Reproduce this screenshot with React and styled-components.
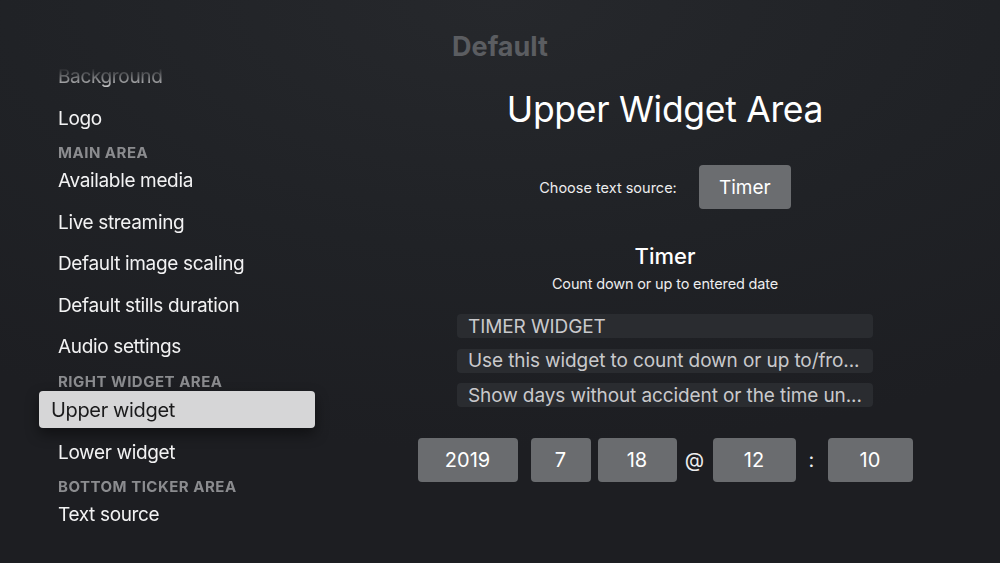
import React from "react";
import styled, { createGlobalStyle } from "styled-components";

const Global = createGlobalStyle`
  html, body { margin: 0; padding: 0; background: #1f2125; }
  body { font-family: Inter, "Noto Sans", sans-serif; -webkit-font-smoothing: antialiased; }
  * { box-sizing: border-box; }
`;

const Screen = styled.div`
  width: 1000px;
  height: 563px;
  overflow: hidden;
  background: radial-gradient(ellipse 90% 80% at 50% 0%, #26282c 0%, #202226 55%, #1d1e22 100%);
  display: flex;
  flex-direction: column;
`;

const TopTitle = styled.div`
  height: 56px;
  padding-top: 32px;
  line-height: 30px;
  text-align: center;
  font-size: 27px;
  font-weight: 700;
  color: #5b5d61;
`;

const Body = styled.div`
  flex: 1;
  display: flex;
  min-height: 0;
`;

const Sidebar = styled.div`
  width: 330px;
  flex: none;
  display: flex;
  flex-direction: column;
  -webkit-mask-image: linear-gradient(to bottom, transparent 0px, transparent 12px, #000 36px);
  mask-image: linear-gradient(to bottom, transparent 0px, transparent 12px, #000 36px);
`;

const Item = styled.div`
  margin-left: 39px;
  width: 276px;
  height: ${(p) => (p.$focused ? "37px" : "41.5px")};
  margin-top: ${(p) => (p.$focused ? "2.75px" : "0")};
  margin-bottom: ${(p) => (p.$focused ? "3.25px" : "0")};
  padding-left: ${(p) => (p.$focused ? "12px" : "19px")};
  display: flex;
  align-items: center;
  font-size: ${(p) => (p.$focused ? "20px" : "19px")};
  color: ${(p) => (p.$focused ? "#1b1b1c" : "#f2f2f3")};
  background: ${(p) => (p.$focused ? "#d6d6d7" : "transparent")};
  border-radius: 4px;
  box-shadow: ${(p) => (p.$focused ? "0 6px 14px rgba(0,0,0,0.45)" : "none")};
  white-space: nowrap;
  letter-spacing: -0.35px;
`;

const SectionHead = styled.div`
  margin-top: 7px;
  margin-left: 58px;
  height: 14px;
  line-height: 14px;
  font-size: 15px;
  font-weight: 700;
  letter-spacing: 0.5px;
  color: #8b8c8f;
  text-transform: uppercase;
  white-space: nowrap;
`;

const Main = styled.div`
  flex: 1;
  display: flex;
  flex-direction: column;
  align-items: center;
`;

const PaneTitle = styled.h1`
  margin: 32px 0 0;
  font-size: 35.5px;
  line-height: 44px;
  font-weight: 400;
  color: #ffffff;
  letter-spacing: -0.3px;
`;

const SourceRow = styled.div`
  margin-top: 33px;
  display: flex;
  align-items: center;
  gap: 22px;
`;

const Label = styled.span`
  font-size: 14.5px;
  color: #ededee;
`;

const Button = styled.div`
  width: 92px;
  height: 44px;
  border-radius: 4px;
  background: #6b6d70;
  color: #ffffff;
  font-size: 19px;
  display: flex;
  align-items: center;
  justify-content: center;
`;

const SubTitle = styled.h2`
  margin: 33px 0 0;
  font-size: 22px;
  line-height: 28px;
  font-weight: 500;
  color: #ffffff;
`;

const Caption = styled.div`
  margin-top: 4px;
  font-size: 14.5px;
  line-height: 20px;
  letter-spacing: -0.15px;
  color: #ededee;
`;

const InfoList = styled.div`
  margin-top: 20px;
  display: flex;
  flex-direction: column;
  gap: 10.5px;
`;

const InfoRow = styled.div`
  width: 416px;
  height: 24px;
  border-radius: 4px;
  background: #2a2c30;
  padding-left: 11px;
  display: flex;
  align-items: center;
  font-size: 19px;
  letter-spacing: -0.1px;
  color: #c9c9cc;
  white-space: nowrap;
  overflow: hidden;
`;

const DateRow = styled.div`
  margin-top: 31px;
  display: flex;
  align-items: center;
  height: 44px;
`;

const Field = styled.div`
  width: ${(p) => p.$w}px;
  margin-left: ${(p) => p.$ml || 0}px;
  height: 44px;
  border-radius: 4px;
  background: #6a6c6f;
  color: #ffffff;
  font-size: 20px;
  display: flex;
  align-items: center;
  justify-content: center;
`;

const Sep = styled.div`
  width: ${(p) => p.$w}px;
  text-align: center;
  font-size: 20px;
  color: #ededee;
`;

const items = [
  { t: "Background" },
  { t: "Logo" },
  { h: "Main area" },
  { t: "Available media" },
  { t: "Live streaming" },
  { t: "Default image scaling" },
  { t: "Default stills duration" },
  { t: "Audio settings" },
  { h: "Right widget area" },
  { t: "Upper widget", f: true },
  { t: "Lower widget" },
  { h: "Bottom ticker area" },
  { t: "Text source" },
];

export default function App() {
  return (
    <>
      <Global />
      <Screen>
        <TopTitle>Default</TopTitle>
        <Body>
          <Sidebar>
            {items.map((it, i) =>
              it.h ? (
                <SectionHead key={i}>{it.h}</SectionHead>
              ) : (
                <Item key={i} $focused={it.f}>
                  {it.t}
                </Item>
              )
            )}
          </Sidebar>
          <Main>
            <PaneTitle>Upper Widget Area</PaneTitle>
            <SourceRow>
              <Label>Choose text source:</Label>
              <Button>Timer</Button>
            </SourceRow>
            <SubTitle>Timer</SubTitle>
            <Caption>Count down or up to entered date</Caption>
            <InfoList>
              <InfoRow>TIMER WIDGET</InfoRow>
              <InfoRow>Use this widget to count down or up to/fro...</InfoRow>
              <InfoRow>Show days without accident or the time un...</InfoRow>
            </InfoList>
            <DateRow>
              <Field $w={100}>2019</Field>
              <Field $w={60} $ml={13}>7</Field>
              <Field $w={79} $ml={7}>18</Field>
              <Sep $w={36}>@</Sep>
              <Field $w={83}>12</Field>
              <Sep $w={32}>:</Sep>
              <Field $w={85}>10</Field>
            </DateRow>
          </Main>
        </Body>
      </Screen>
    </>
  );
}
